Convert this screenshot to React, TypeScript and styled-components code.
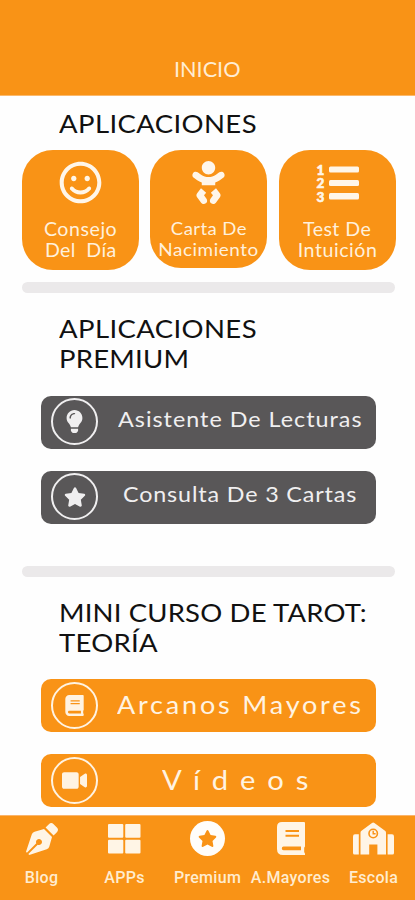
import React from "react";
import styled, { createGlobalStyle } from "styled-components";
import { FaBaby, FaBook, FaLightbulb, FaPenNib, FaRegSmile, FaStar, FaVideo } from "react-icons/fa";

const ORANGE = "#f99316";
const CREAM = "#fff6e9";
const GREY = "#595758";

const GlobalStyle = createGlobalStyle`
  * { box-sizing: border-box; }
  body { margin: 0; background: #fff; }
`;

const Screen = styled.div`
  width: 415px;
  height: 900px;
  overflow: hidden;
  display: flex;
  flex-direction: column;
  background: #fefefe;
  font-family: Lato, "Open Sans", sans-serif;
`;

const Header = styled.header`
  height: 96px;
  flex: none;
  display: flex;
  align-items: flex-end;
  justify-content: center;
  padding-bottom: 13px;
  background: ${ORANGE};
  border-bottom: 1px solid #fbb96c;
`;

/* Wide geometric lettering: glyphs are stretched and tracked per label. */
const Wide = styled.span<{ $size: number; $x?: number; $track?: number }>`
  display: block;
  white-space: pre;
  font-size: ${(p) => p.$size}px;
  letter-spacing: ${(p) => p.$track ?? 0}px;
  transform: scaleX(${(p) => p.$x ?? 1});
`;

const HeaderTitle = styled(Wide)`
  color: #ffecd2;
  line-height: 26px;
`;

const Main = styled.main`
  flex: 1;
  min-height: 0;
  overflow: hidden;
`;

const Heading = styled.h2<{ $top: number; $bottom: number }>`
  margin: 0;
  padding: ${(p) => p.$top}px 0 ${(p) => p.$bottom}px 59px;
  font-weight: 400;
  color: #111;
`;

const HeadingLine = styled(Wide)`
  line-height: 30px;
  transform-origin: left center;
`;

const Cards = styled.div`
  display: flex;
  align-items: flex-start;
  padding-left: 22px;
  gap: 11px;
`;

const Card = styled.button<{ $height: number; $shift?: number }>`
  width: 117px;
  height: ${(p) => p.$height}px;
  margin: 0 0 0 ${(p) => p.$shift ?? 0}px;
  padding: 11px 0 0;
  border: 0;
  border-radius: 31px;
  background: ${ORANGE};
  color: ${CREAM};
  font-family: inherit;
  display: flex;
  flex-direction: column;
  align-items: center;
`;

const CardIcon = styled.span<{ $space: number }>`
  height: 43px;
  margin-bottom: ${(p) => p.$space}px;
  display: flex;
  align-items: center;
`;

const CardText = styled(Wide)`
  line-height: 21px;
  color: #fff0dc;
`;

const Divider = styled.div<{ $top: number }>`
  width: 373px;
  height: 11px;
  margin: ${(p) => p.$top}px 0 0 22px;
  border-radius: 6px;
  background: #ebe9ea;
`;

const Actions = styled.div`
  display: flex;
  flex-direction: column;
  gap: 22px;
  padding-left: 41px;
`;

const Action = styled.button<{ $dark?: boolean }>`
  width: 335px;
  height: 53px;
  flex: none;
  border: 0;
  border-radius: 10px;
  padding: 0 0 1px 10px;
  display: flex;
  align-items: center;
  background: ${(p) => (p.$dark ? GREY : ORANGE)};
  color: ${(p) => (p.$dark ? "#f0eff0" : "#fff3e2")};
  font-family: inherit;
`;

const Ring = styled.span`
  width: 47px;
  height: 47px;
  flex: none;
  border: 2px solid currentColor;
  border-radius: 50%;
  display: flex;
  align-items: center;
  justify-content: center;
`;

const ActionText = styled(Wide)<{ $left: number; $lift?: number }>`
  margin-left: ${(p) => p.$left}px;
  line-height: 30px;
  padding-bottom: ${(p) => p.$lift ?? 3}px;
  transform-origin: left center;
`;

const Nav = styled.nav`
  height: 85px;
  flex: none;
  display: grid;
  grid-template-columns: repeat(5, 83px);
  background: ${ORANGE};
  border-top: 1px solid #fbb46a;
  color: #fff5e6;
`;

const NavItem = styled.a`
  display: flex;
  flex-direction: column;
  align-items: center;
  padding-top: 4px;
`;

const NavIcon = styled.span`
  height: 37px;
  display: flex;
  align-items: center;
`;

const NavLabel = styled.span`
  margin-top: 10px;
  font: 500 16px/22px Roboto, sans-serif;
  letter-spacing: 0.3px;
  color: #ffeccf;
  white-space: nowrap;
`;

const NumberedList = () => (
  <svg width="45" height="42" viewBox="0 0 45 42" fill={CREAM}>
    <g fontFamily="Lato, sans-serif" fontWeight="900" fontSize="13.5" stroke={CREAM} strokeWidth="0.6">
      <text x="1.5" y="12.5">1</text>
      <text x="1.5" y="26">2</text>
      <text x="1.5" y="39.5">3</text>
    </g>
    <rect x="14" y="4.5" width="30" height="6" rx="1.5" />
    <rect x="14" y="18" width="30" height="6" rx="1.5" />
    <rect x="14" y="31" width="30" height="6.5" rx="1.5" />
  </svg>
);

const Panes = () => (
  <svg width="33" height="30" viewBox="0 0 33 30" fill="currentColor">
    <rect width="15.3" height="13.7" rx="1" />
    <rect x="17.2" width="15.3" height="13.7" rx="1" />
    <rect y="15.8" width="15.3" height="13.7" rx="1" />
    <rect x="17.2" y="15.8" width="15.3" height="13.7" rx="1" />
  </svg>
);

const StarBadge = styled.span`
  width: 35px;
  height: 35px;
  border-radius: 50%;
  background: #fffdfa;
  color: ${ORANGE};
  display: flex;
  align-items: center;
  justify-content: center;
`;

const School = () => (
  <svg width="41" height="33" viewBox="0 0 41 33" fill="currentColor">
    <path d="M0 14.5Q0 12.3 2 12.3H5.8V32.5H1.5Q0 32.5 0 31Z" />
    <path d="M41 14.5Q41 12.3 39 12.3H34.6V32.5H39.5Q41 32.5 41 31Z" />
    <path d="M19 1Q20.2.2 21.4 1L32 8.7Q33 9.4 33 10.8V32.5H24.4V22.5H16.2V32.5H7.5V10.8Q7.5 9.4 8.5 8.7Z" />
    <circle cx="20.2" cy="11.5" r="4.2" fill="none" stroke={ORANGE} strokeWidth="1.6" />
    <path d="M20.2 8.8V11.8H22.6" fill="none" stroke={ORANGE} strokeWidth="1.4" />
  </svg>
);

const Tome = () => (
  <svg width="28" height="33" viewBox="0 0 28 33" fill="currentColor">
    <path
      fillRule="evenodd"
      d="M5 0H27Q28 0 28 1V24Q28 25 27.2 25.5V30.2Q28 31 28 32V33H6Q0 33 0 27V5Q0 0 5 0ZM8.5 8V10H22V8ZM8.5 12.7V14.7H22V12.7ZM6.5 24.5Q4.8 24.5 4.8 26.5Q4.8 28.3 6.5 28.3H24V24.5Z"
    />
  </svg>
);

export default function App() {
  return (
    <Screen>
      <GlobalStyle />
      <Header>
        <HeaderTitle $size={21} $x={1.03}>INICIO</HeaderTitle>
      </Header>
      <Main>
        <Heading $top={12} $bottom={12}>
          <HeadingLine $size={25} $x={1.1} $track={0.35}>APLICACIONES</HeadingLine>
        </Heading>
        <Cards>
          <Card $height={120}>
            <CardIcon $space={15}><FaRegSmile size={43} /></CardIcon>
            <CardText $size={18.5} $x={1.06} $track={0.5}>Consejo</CardText>
            <CardText $size={18.5} $x={1.06} $track={0.3}>Del  Día</CardText>
          </Card>
          <Card $height={118}>
            <CardIcon $space={14}><FaBaby size={43} /></CardIcon>
            <CardText $size={17.5} $x={1.06} $track={0.4}>Carta De</CardText>
            <CardText $size={17.5} $x={1.08} $track={0.5}>Nacimiento</CardText>
          </Card>
          <Card $height={120} $shift={1}>
            <CardIcon $space={15}><NumberedList /></CardIcon>
            <CardText $size={18.5} $x={1.06} $track={0.4}>Test De</CardText>
            <CardText $size={18.5} $x={1.06} $track={0.5}>Intuición</CardText>
          </Card>
        </Cards>
        <Divider $top={12} />
        <Heading $top={20} $bottom={22.5}>
          <HeadingLine $size={25} $x={1.1} $track={0.35}>APLICACIONES</HeadingLine>
          <HeadingLine $size={25} $x={1.1} $track={0.2}>PREMIUM</HeadingLine>
        </Heading>
        <Actions>
          <Action $dark>
            <Ring><FaLightbulb size={23} /></Ring>
            <ActionText $left={20} $lift={5} $size={22} $x={1.06} $track={0.95}>Asistente De Lecturas</ActionText>
          </Action>
          <Action $dark>
            <Ring><FaStar size={22} /></Ring>
            <ActionText $left={25} $lift={5} $size={22} $x={1.06} $track={0.8}>Consulta De 3 Cartas</ActionText>
          </Action>
        </Actions>
        <Divider $top={42.5} />
        <Heading $top={20} $bottom={22}>
          <HeadingLine $size={25} $x={1.1} $track={0.15}>MINI CURSO DE TAROT:</HeadingLine>
          <HeadingLine $size={25} $x={1.1} $track={0.25}>TEORÍA</HeadingLine>
        </Heading>
        <Actions>
          <Action>
            <Ring><FaBook size={21} /></Ring>
            <ActionText $left={19} $lift={2} $size={25} $x={1.08} $track={2.6}>Arcanos Mayores</ActionText>
          </Action>
          <Action>
            <Ring><FaVideo size={25} /></Ring>
            <ActionText $left={64} $lift={0} $size={27} $x={1.08} $track={11}>Vídeos</ActionText>
          </Action>
        </Actions>
      </Main>
      <Nav>
        <NavItem><NavIcon><FaPenNib size={32} /></NavIcon><NavLabel>Blog</NavLabel></NavItem>
        <NavItem><NavIcon><Panes /></NavIcon><NavLabel>APPs</NavLabel></NavItem>
        <NavItem><NavIcon><StarBadge><FaStar size={19} /></StarBadge></NavIcon><NavLabel>Premium</NavLabel></NavItem>
        <NavItem><NavIcon><Tome /></NavIcon><NavLabel>A.Mayores</NavLabel></NavItem>
        <NavItem><NavIcon><School /></NavIcon><NavLabel>Escola</NavLabel></NavItem>
      </Nav>
    </Screen>
  );
}
